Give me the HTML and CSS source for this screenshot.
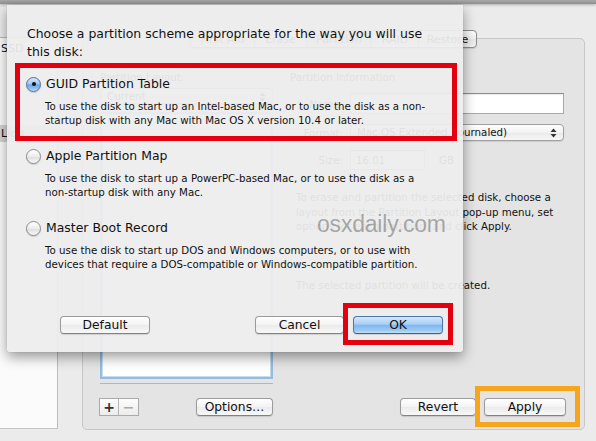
FILE: index.html
```html
<!DOCTYPE html>
<html>
<head>
<meta charset="utf-8">
<link rel="stylesheet" href="styles.css">
</head>
<body>
<div class="window">
  <div class="toolbar-edge"></div>
  <div class="main">
    <aside class="sidebar">
      <ul class="disk-list">
        <li class="disk">SSD</li>
        <li class="disk sel">Lion</li>
      </ul>
    </aside>
    <section class="content">
      <div class="tabs">
        <span class="seg w-first">First Aid</span><span class="seg w-erase">Erase</span><span class="seg sel w-part">Partition</span><span class="seg w-raid">RAID</span><span class="seg w-rest">Restore</span>
      </div>
      <div class="panel">
        <div class="col-left">
          <div class="col-title">Partition Layout:</div>
          <div class="popup small">Current
            <svg class="updown" width="7" height="10" viewBox="0 0 7 10"><path d="M3.5 0.5 L6.5 4 L0.5 4 Z M3.5 9.5 L6.5 6 L0.5 6 Z" fill="#333"/></svg>
          </div>
          <div class="layout-box"></div>
          <div class="layout-rule"></div>
          <div class="left-foot">
            <div class="plusminus"><span class="pm plus">+</span><span class="pm minus">−</span></div>
            <button class="btn btn-options">Options…</button>
          </div>
        </div>
        <div class="col-right">
          <div class="col-title">Partition Information</div>
          <div class="form-row row-name"><span class="form-label">Name:</span><div class="field grow"></div></div>
          <div class="form-row row-format"><span class="form-label">Format:</span>
            <div class="popup grow">Mac OS Extended (Journaled)
              <svg class="updown" width="7" height="10" viewBox="0 0 7 10"><path d="M3.5 0.5 L6.5 4 L0.5 4 Z M3.5 9.5 L6.5 6 L0.5 6 Z" fill="#333"/></svg>
            </div>
          </div>
          <div class="form-row row-size"><span class="form-label">Size:</span><div class="field size">16.01</div><span class="unit">GB</span></div>
          <p class="help">To erase and partition the selected disk, choose a<br>layout from the Partition Layout pop-up menu, set<br>options for each partition, and click Apply.</p>
          <p class="status">The selected partition will be created.</p>
          <div class="right-foot">
            <button class="btn btn-revert">Revert</button>
            <button class="btn btn-apply">Apply</button>
          </div>
        </div>
      </div>
    </section>
  </div>

  <div class="sheet">
    <p class="sheet-title">Choose a partition scheme appropriate for the way you will use<br>this disk:</p>
    <div class="options">
      <div class="option">
        <div class="opt-head"><span class="radio on"></span><span class="opt-label">GUID Partition Table</span></div>
        <p class="opt-desc">To use the disk to start up an Intel-based Mac, or to use the disk as a non-<br>startup disk with any Mac with Mac OS X version 10.4 or later.</p>
      </div>
      <div class="option">
        <div class="opt-head"><span class="radio"></span><span class="opt-label">Apple Partition Map</span></div>
        <p class="opt-desc">To use the disk to start up a PowerPC-based Mac, or to use the disk as a<br>non-startup disk with any Mac.</p>
      </div>
      <div class="option">
        <div class="opt-head"><span class="radio"></span><span class="opt-label">Master Boot Record</span></div>
        <p class="opt-desc">To use the disk to start up DOS and Windows computers, or to use with<br>devices that require a DOS-compatible or Windows-compatible partition.</p>
      </div>
    </div>
    <div class="sheet-buttons">
      <button class="btn sbtn btn-default">Default</button>
      <div class="sheet-right">
        <button class="btn sbtn btn-cancel">Cancel</button>
        <button class="btn sbtn btn-ok">OK</button>
      </div>
    </div>
  </div>

  <div class="watermark">osxdaily.com</div>
  <div class="mark red mark-guid"></div>
  <div class="mark red mark-ok"></div>
  <div class="mark orange mark-apply"></div>
</div>
</body>
</html>
```

FILE: styles.css
```css
* { box-sizing: border-box; }
html, body { margin: 0; padding: 0; }
body {
  width: 596px;
  height: 441px;
  overflow: hidden;
  font-family: "DejaVu Sans", sans-serif;
  font-size: 10.25px;
  color: #111;
  background: #e9e9e9;
}
.window {
  position: relative;
  width: 596px;
  height: 441px;
  display: flex;
  flex-direction: column;
  background: #ebebeb;
}
.toolbar-edge {
  height: 4px;
  background: linear-gradient(#a9a9a9, #8f8f8f);
  box-shadow: 0 1px 3px rgba(0,0,0,0.25);
  position: relative;
  z-index: 2;
}
.main {
  flex: 1;
  display: flex;
}
/* sidebar */
.sidebar {
  width: 58px;
  padding: 33px 0 12px 0;
  display: flex;
}
.disk-list {
  list-style: none;
  margin: 0;
  padding: 2px 0 0 0;
  flex: 1;
  background: #fbfbfb;
  border-top: 1px solid #b9b9b9;
  border-bottom: 1px solid #c4c4c4;
  border-right: 1px solid #bcbcbc;
  overflow: hidden;
}
.disk {
  height: 17px;
  line-height: 17px;
  padding-left: 1px;
  white-space: nowrap;
  font-size: 11px;
}
.disk.sel { background: #d4d4d4; margin-top: 68px; }

/* content */
.content {
  flex: 1;
  display: flex;
  flex-direction: column;
  padding: 26px 11px 11px 24px;
}
.tabs {
  align-self: center;
  display: flex;
  height: 18px;
  margin-bottom: -10px;
  position: relative;
  z-index: 1;
  border: 1px solid #8e8e8e;
  border-radius: 4px;
  background: linear-gradient(#fdfdfd, #eeeeee 50%, #e6e6e6 51%, #f3f3f3);
  box-shadow: 0 1px 1px rgba(0,0,0,0.12);
  overflow: hidden;
}
.seg {
  display: flex;
  align-items: center;
  justify-content: center;
  font-size: 11px;
  border-left: 1px solid #a3a3a3;
}
.seg:first-child { border-left: none; }
.seg.sel { background: linear-gradient(#c4c4c4, #d6d6d6); }
.w-first { width: 63px; }
.w-erase { width: 52px; }
.w-part { width: 65px; }
.w-raid { width: 47px; }
.w-rest { width: 58px; }

.panel {
  flex: 1;
  display: flex;
  gap: 17px;
  padding: 31px 18px 13px 17px;
  border: 1px solid #c7c7c7;
  border-radius: 5px;
  background: #e4e4e4;
}
.col-left {
  width: 173px;
  display: flex;
  flex-direction: column;
}
.col-right {
  flex: 1;
  display: flex;
  flex-direction: column;
}
.col-title {
  line-height: 14px;
  height: 14px;
}
.popup {
  position: relative;
  height: 17px;
  line-height: 15px;
  padding-left: 6px;
  border: 1px solid #a0a0a0;
  border-radius: 4px;
  background: linear-gradient(#fefefe, #f2f2f2 50%, #e9e9e9 51%, #f7f7f7);
  box-shadow: 0 1px 1px rgba(0,0,0,0.1);
  white-space: nowrap;
}
.popup.small { margin-top: 4px; height: 16px; }
.updown {
  position: absolute;
  right: 6px;
  top: 3px;
}
.layout-box {
  flex: 1;
  margin-top: 8px;
  background: #ffffff;
  border: 2px solid #94bbe0;
  box-shadow: inset 0 0 0 1px #c9dcef;
}
.layout-rule {
  margin-top: 4px;
  height: 1px;
  background: #b5b5b5;
}
.left-foot {
  margin-top: 14px;
  height: 18px;
  display: flex;
  align-items: center;
  justify-content: space-between;
}
.plusminus {
  display: flex;
  margin-left: -1px;
  height: 18px;
  border: 1px solid #aaaaaa;
  background: linear-gradient(#fdfdfd, #ececec);
}
.pm {
  width: 19px;
  display: flex;
  align-items: center;
  justify-content: center;
  font-size: 14px;
  font-weight: bold;
  line-height: 1;
}
.pm.plus { color: #333; border-right: 1px solid #b5b5b5; }
.pm.minus { color: #a8a8a8; }

.btn {
  font-family: "DejaVu Sans", sans-serif;
  font-size: 12.3px;
  color: #111;
  height: 18px;
  padding: 0;
  line-height: 16px;
  border: 1px solid #9b9b9b;
  border-bottom-color: #818181;
  border-radius: 4px;
  background: linear-gradient(#ffffff, #f3f3f3 50%, #ebebeb 51%, #f8f8f8);
  box-shadow: 0 1px 1px rgba(0,0,0,0.12);
}
.btn-options { width: 77px; }

.form-row {
  display: flex;
  align-items: center;
}
.form-label {
  width: 53px;
  text-align: right;
  margin-right: 7px;
}
.grow { flex: 1; margin-right: 2px; }
.row-name { margin-top: 9px; }
.row-format { margin-top: 10px; }
.row-size { margin-top: 9px; }
.field {
  height: 21px;
  background: #ffffff;
  border: 1px solid #a9a9a9;
  border-top-color: #8d8d8d;
  box-shadow: inset 0 1px 1px rgba(0,0,0,0.08);
  line-height: 19px;
  padding-left: 5px;
}
.field.size { width: 75px; height: 20px; }
.unit { margin-left: 14px; }
.help {
  margin: 20px 0 0 6px;
  line-height: 14.5px;
  white-space: nowrap;
}
.status {
  margin: 44px 0 0 6px;
  line-height: 14px;
}
.right-foot {
  margin-top: auto;
  display: flex;
  justify-content: flex-end;
  gap: 8px;
}
.btn-revert { width: 76px; }
.btn-apply { width: 82px; }

/* sheet */
.sheet {
  position: absolute;
  left: 7px;
  top: 5px;
  width: 456px;
  height: 347px;
  padding: 20px 20px 18px 20px;
  display: flex;
  flex-direction: column;
  background: rgba(237,237,237,0.94);
  box-shadow: 0 5px 13px rgba(0,0,0,0.4), 0 0 1px rgba(0,0,0,0.3);
  border-radius: 0 0 3px 3px;
  z-index: 3;
}
.sheet-title {
  margin: 0;
  font-size: 12.45px;
  line-height: 18px;
  white-space: nowrap;
}
.options { margin-top: 14px; }
.option + .option { margin-top: 20px; }
.opt-head {
  display: flex;
  align-items: center;
  height: 18px;
  margin-left: -1px;
}
.radio {
  width: 15px;
  height: 15px;
  border-radius: 50%;
  margin-right: 5px;
  border: 1px solid #8c8c8c;
  background: linear-gradient(#ffffff, #ececec 50%, #e0e0e0 55%, #f6f6f6);
  box-shadow: 0 1px 1px rgba(0,0,0,0.15);
  position: relative;
  flex: none;
}
.radio.on {
  border-color: #4c6f9d;
  background: linear-gradient(#d5e8fa, #9fc8f1 45%, #6ba6e4 52%, #8fc0f0 80%, #c3e0fa);
}
.radio.on::after {
  content: "";
  position: absolute;
  left: 4.5px;
  top: 4.5px;
  width: 4px;
  height: 4px;
  border-radius: 50%;
  background: #111;
}
.opt-label {
  font-size: 12.45px;
  line-height: 18px;
}
.opt-desc {
  margin: 6px 0 0 18px;
  line-height: 14px;
  font-size: 10.25px;
  white-space: nowrap;
}
.sheet-buttons {
  margin-top: auto;
  display: flex;
  justify-content: space-between;
  padding-left: 33px;
}
.sheet-right { display: flex; gap: 9px; }
.sbtn { width: 90px; }
.btn-cancel { width: 89px; }
.btn-ok {
  border-color: #4e76a7;
  border-bottom-color: #3d5f8c;
  background: linear-gradient(#d3e8fc, #a9cff6 45%, #7fb7ef 52%, #9ccaf5 85%, #c6e2fb);
}

/* overlays */
.watermark {
  position: absolute;
  left: 317px;
  top: 211px;
  font-family: "Liberation Sans", Arial, sans-serif;
  font-size: 23px;
  color: rgba(95,95,95,0.5);
  z-index: 5;
  letter-spacing: -0.2px;
}
.mark {
  position: absolute;
  z-index: 6;
  border-style: solid;
}
.red { border-color: #e3000f; border-width: 5px; }
.orange { border-color: #f6a51d; border-width: 5px; }
.mark-guid { left: 15px; top: 63px; width: 442px; height: 78px; }
.mark-ok { left: 343px; top: 303px; width: 110px; height: 42px; }
.mark-apply { left: 475px; top: 386px; width: 105px; height: 41px; }
```
